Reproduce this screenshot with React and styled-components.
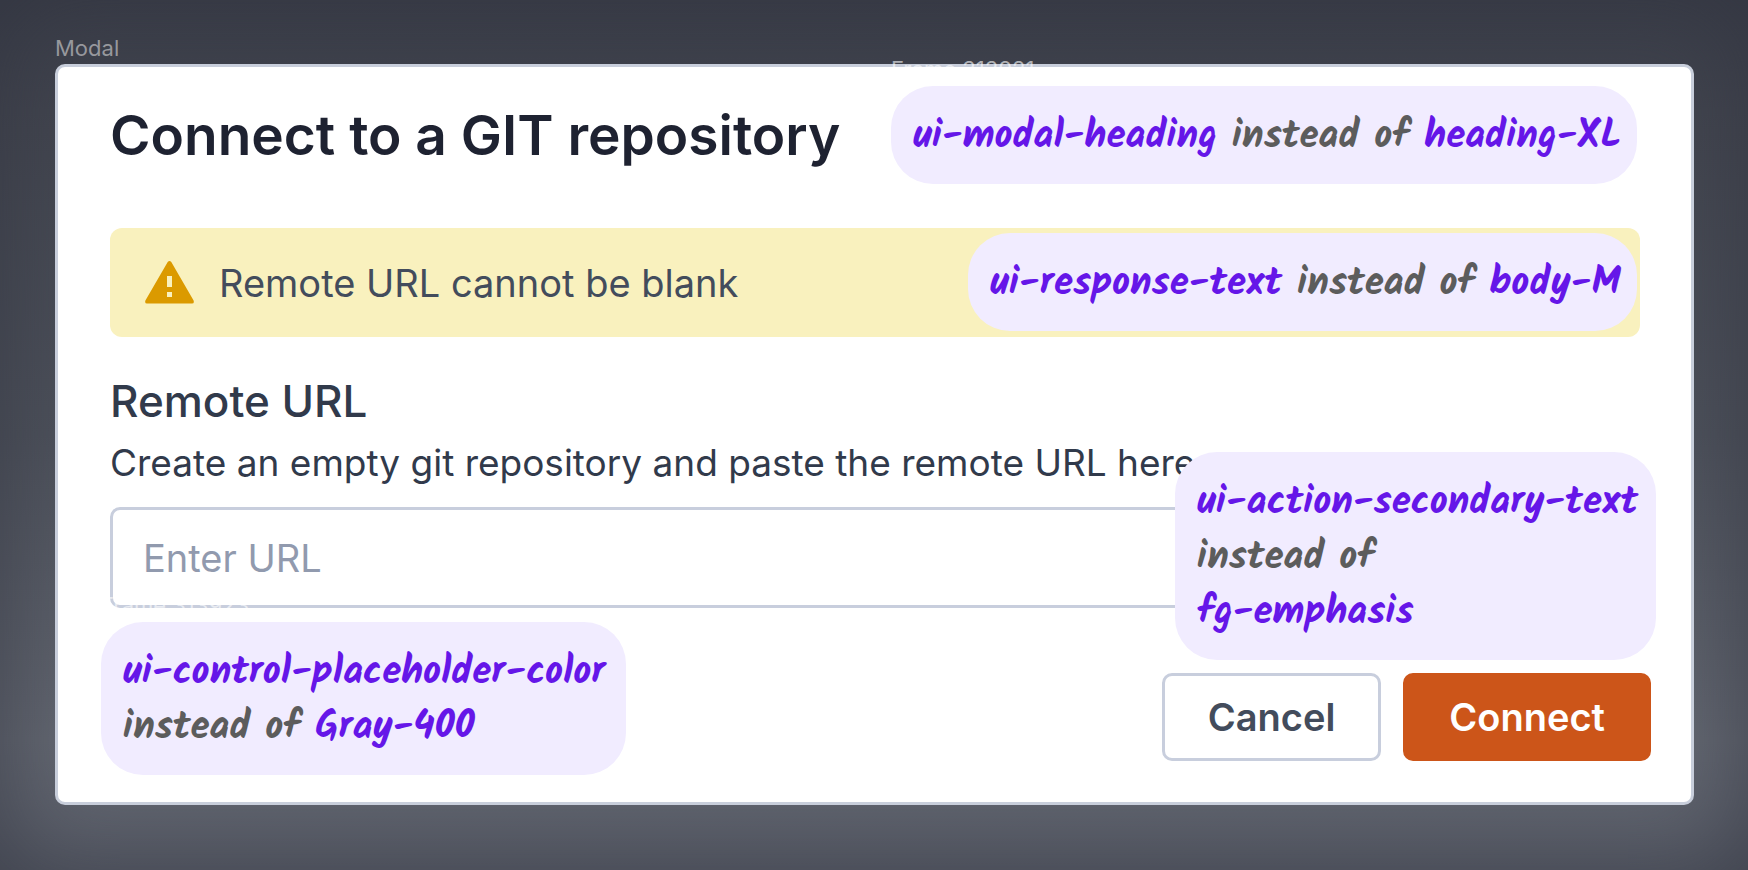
import React from "react";
import styled, { createGlobalStyle } from "styled-components";

const Global = createGlobalStyle`
  *, *::before, *::after { box-sizing: border-box; }
  body {
    margin: 0;
    font-family: Inter, "Liberation Sans", sans-serif;
  }
  h1, p { margin: 0; }
`;

const Canvas = styled.main`
  min-height: 100vh;
  padding: 32px 54px 65px 55px;
  background: linear-gradient(#3b3e49, #42454f 15%, #4d515b 50%, #636771 85%, #5c606b);
  box-shadow: inset 0 0 100px 0 rgba(48, 51, 62, 0.7);
`;

const FrameLabel = styled.div`
  height: 32px;
  font-size: 22px;
  line-height: 32px;
  color: #97989d;
`;

const GhostLabel = styled.span`
  position: absolute;
  left: 0;
  top: -30px;
  font: 400 22px/26px Inter, sans-serif;
  white-space: nowrap;
  color: rgba(255, 255, 255, 0.6);
`;

const Modal = styled.section`
  position: relative;
  padding: 36px 51px 41px 52px;
  border: 3px solid #c8cedb;
  border-radius: 10px;
  background: #fff;
`;

const Title = styled.h1`
  font-size: 55px;
  font-weight: 600;
  line-height: 64px;
  color: #1e2231;
`;

const Banner = styled.div`
  display: flex;
  align-items: center;
  gap: 25px;
  height: 109px;
  margin-top: 61px;
  padding: 0 35px;
  border-radius: 12px;
  background: #f9f1be;
  font-size: 38px;
  color: #434c5c;
`;

const Field = styled.div`
  display: flex;
  flex-direction: column;
  margin-top: 36px;
  color: #313a4b;
`;

const FieldLabel = styled.label`
  font-size: 44px;
  font-weight: 500;
  line-height: 56px;
`;

const Hint = styled.p`
  margin: 8px 0 18px;
  font-size: 37px;
  line-height: 52px;
`;

const UrlInput = styled.input`
  height: 101px;
  padding: 0 30px;
  border: 3px solid #c8cedd;
  border-radius: 10px;
  background: #fff;
  font: 400 38px Inter, sans-serif;
  color: #313a4b;
  &::placeholder { color: #919aae; opacity: 1; }
`;

const Actions = styled.div`
  display: flex;
  justify-content: flex-end;
  gap: 22px;
  margin: 65px -11px 0 0;
`;

const Button = styled.button`
  height: 88px;
  padding: 0 43px;
  border: 3px solid ${(p) => (p.$primary ? "#cc5519" : "#c8cedd")};
  border-radius: 10px;
  background: ${(p) => (p.$primary ? "#cc5519" : "#fff")};
  color: ${(p) => (p.$primary ? "#fff" : "#434c5c")};
  font: 600 38px Inter, sans-serif;
`;

const Note = styled.aside`
  position: absolute;
  left: ${(p) => p.$left || "auto"};
  right: ${(p) => p.$right || "auto"};
  top: ${(p) => p.$top};
  width: ${(p) => p.$width};
  padding: 24px 22px 19px;
  border-radius: 42px;
  background: #f1ecff;
  font: 700 39px/55px Kalam, Lato, cursive;
  color: #5c5c5c;
  white-space: nowrap;
`;

const Token = styled.span`
  color: #6516e8;
`;

function WarningIcon() {
  return (
    <svg width="49" height="43" viewBox="0 0 49 43" aria-hidden="true">
      <path
        fill="#db9a00"
        fillRule="evenodd"
        d="M22.7 1Q24.500 -1 26.300 1L48.600 39.500Q49.500 42.500 47 42.500H2Q-.5 42.500 .4 39.500ZM22 15V26H27V15ZM22 31V36H27V31Z"
      />
    </svg>
  );
}

export default function App() {
  return (
    <>
      <Global />
      <Canvas>
        <FrameLabel>Modal</FrameLabel>
        <Modal>
          <Title>Connect to a GIT repository</Title>
          <Banner role="alert">
            <WarningIcon />
            <p>Remote URL cannot be blank</p>
          </Banner>
          <Field>
            <FieldLabel htmlFor="remote-url">Remote URL</FieldLabel>
            <Hint>Create an empty git repository and paste the remote URL here</Hint>
            <UrlInput id="remote-url" type="url" placeholder="Enter URL" />
          </Field>
          <Actions>
            <Button type="button">Cancel</Button>
            <Button type="button" $primary>Connect</Button>
          </Actions>

          <Note $right="54px" $top="19px" $width="746px">
            <GhostLabel>Frame 313921</GhostLabel>
            <Token>ui-modal-heading</Token> instead of <Token>heading-XL</Token>
          </Note>
          <Note $right="54px" $top="166px" $width="669px">
            <Token>ui-response-text</Token> instead of <Token>body-M</Token>
          </Note>
          <Note $right="35px" $top="385px" $width="481px">
            <Token>ui-action-secondary-text</Token>
            <br />
            instead of
            <br />
            <Token>fg-emphasis</Token>
          </Note>
          <Note $left="43px" $top="555px" $width="525px">
            <GhostLabel>Frame 313923</GhostLabel>
            <Token>ui-control-placeholder-color</Token>
            <br />
            instead of <Token>Gray-400</Token>
          </Note>
        </Modal>
      </Canvas>
    </>
  );
}
